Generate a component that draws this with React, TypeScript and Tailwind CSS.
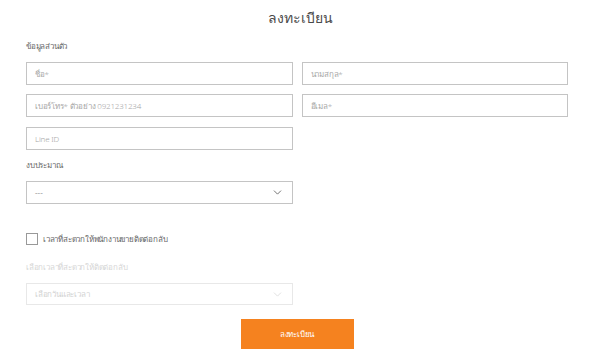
import { ChevronDown } from "lucide-react";

const inputCls =
  "h-[23px] w-full border border-[#c4c4c4] bg-white px-[8px] text-[8px] tracking-[-0.2px] font-light text-[#555] placeholder:text-[#a6a6a6] outline-none";

const App = () => {
  return (
    <div
      className="w-[600px] h-[361px] bg-white overflow-hidden"
      style={{ fontFamily: '"Noto Sans", "Liberation Sans", sans-serif' }}
    >
      <form className="flex flex-col px-[26px]" onSubmit={(e) => e.preventDefault()}>
        <h1 className="h-[36px] text-center text-[14px] leading-[36px] text-[#4a4a4a] font-light">ลงทะเบียน</h1>

        <label className="mt-[4px] h-[12px] text-[8px] tracking-[-0.2px] leading-[12px] font-light text-[#666]">ข้อมูลส่วนตัว</label>

        <div className="mt-[10px] grid grid-cols-2 gap-x-[9px] gap-y-[9px] w-[542px]">
          <input className={inputCls} placeholder="ชื่อ*" />
          <input className={inputCls} placeholder="นามสกุล*" />
          <input className={inputCls} placeholder="เบอร์โทร* ตัวอย่าง 0921231234" />
          <input className={inputCls} placeholder="อีเมล*" />
          <input className={`${inputCls} mt-[1px]`} placeholder="Line ID" />
        </div>

        <label className="mt-[9px] h-[12px] text-[8px] tracking-[-0.2px] leading-[12px] font-light text-[#666]">งบประมาณ</label>

        <div className="mt-[10px] w-[267px] h-[23px] border border-[#c4c4c4] flex items-center justify-between px-[8px]">
          <span className="text-[8px] text-[#a6a6a6]">---</span>
          <ChevronDown size={13} strokeWidth={1.5} className="text-[#555]" />
        </div>

        <div className="mt-[29px] h-[12px] flex items-center gap-[5px]">
          <span className="w-[12px] h-[12px] border border-[#999] bg-white" />
          <span className="text-[8px] tracking-[-0.2px] leading-[12px] font-light text-[#666]">เวลาที่สะดวกให้พนักงานขายติดต่อกลับ</span>
        </div>

        <label className="mt-[16px] h-[12px] text-[8px] tracking-[-0.2px] leading-[12px] font-light text-[#d6d6d6]">เลือกเวลาที่สะดวกให้ติดต่อกลับ</label>

        <div className="mt-[10px] w-[267px] h-[22px] border border-[#e8e8e8] flex items-center justify-between px-[8px]">
          <span className="text-[8px] tracking-[-0.2px] font-light text-[#d2d2d2]">เลือกวันและเวลา</span>
          <ChevronDown size={13} strokeWidth={1.2} className="text-[#d0d0d0]" />
        </div>

        <div className="mt-[14px] flex justify-center">
          <button
            type="submit"
            className="mr-[6px] w-[113px] h-[30px] bg-[#f5821f] text-white text-[8px] tracking-[-0.2px] font-light"
          >
            ลงทะเบียน
          </button>
        </div>
      </form>
    </div>
  );
};

export default App;
